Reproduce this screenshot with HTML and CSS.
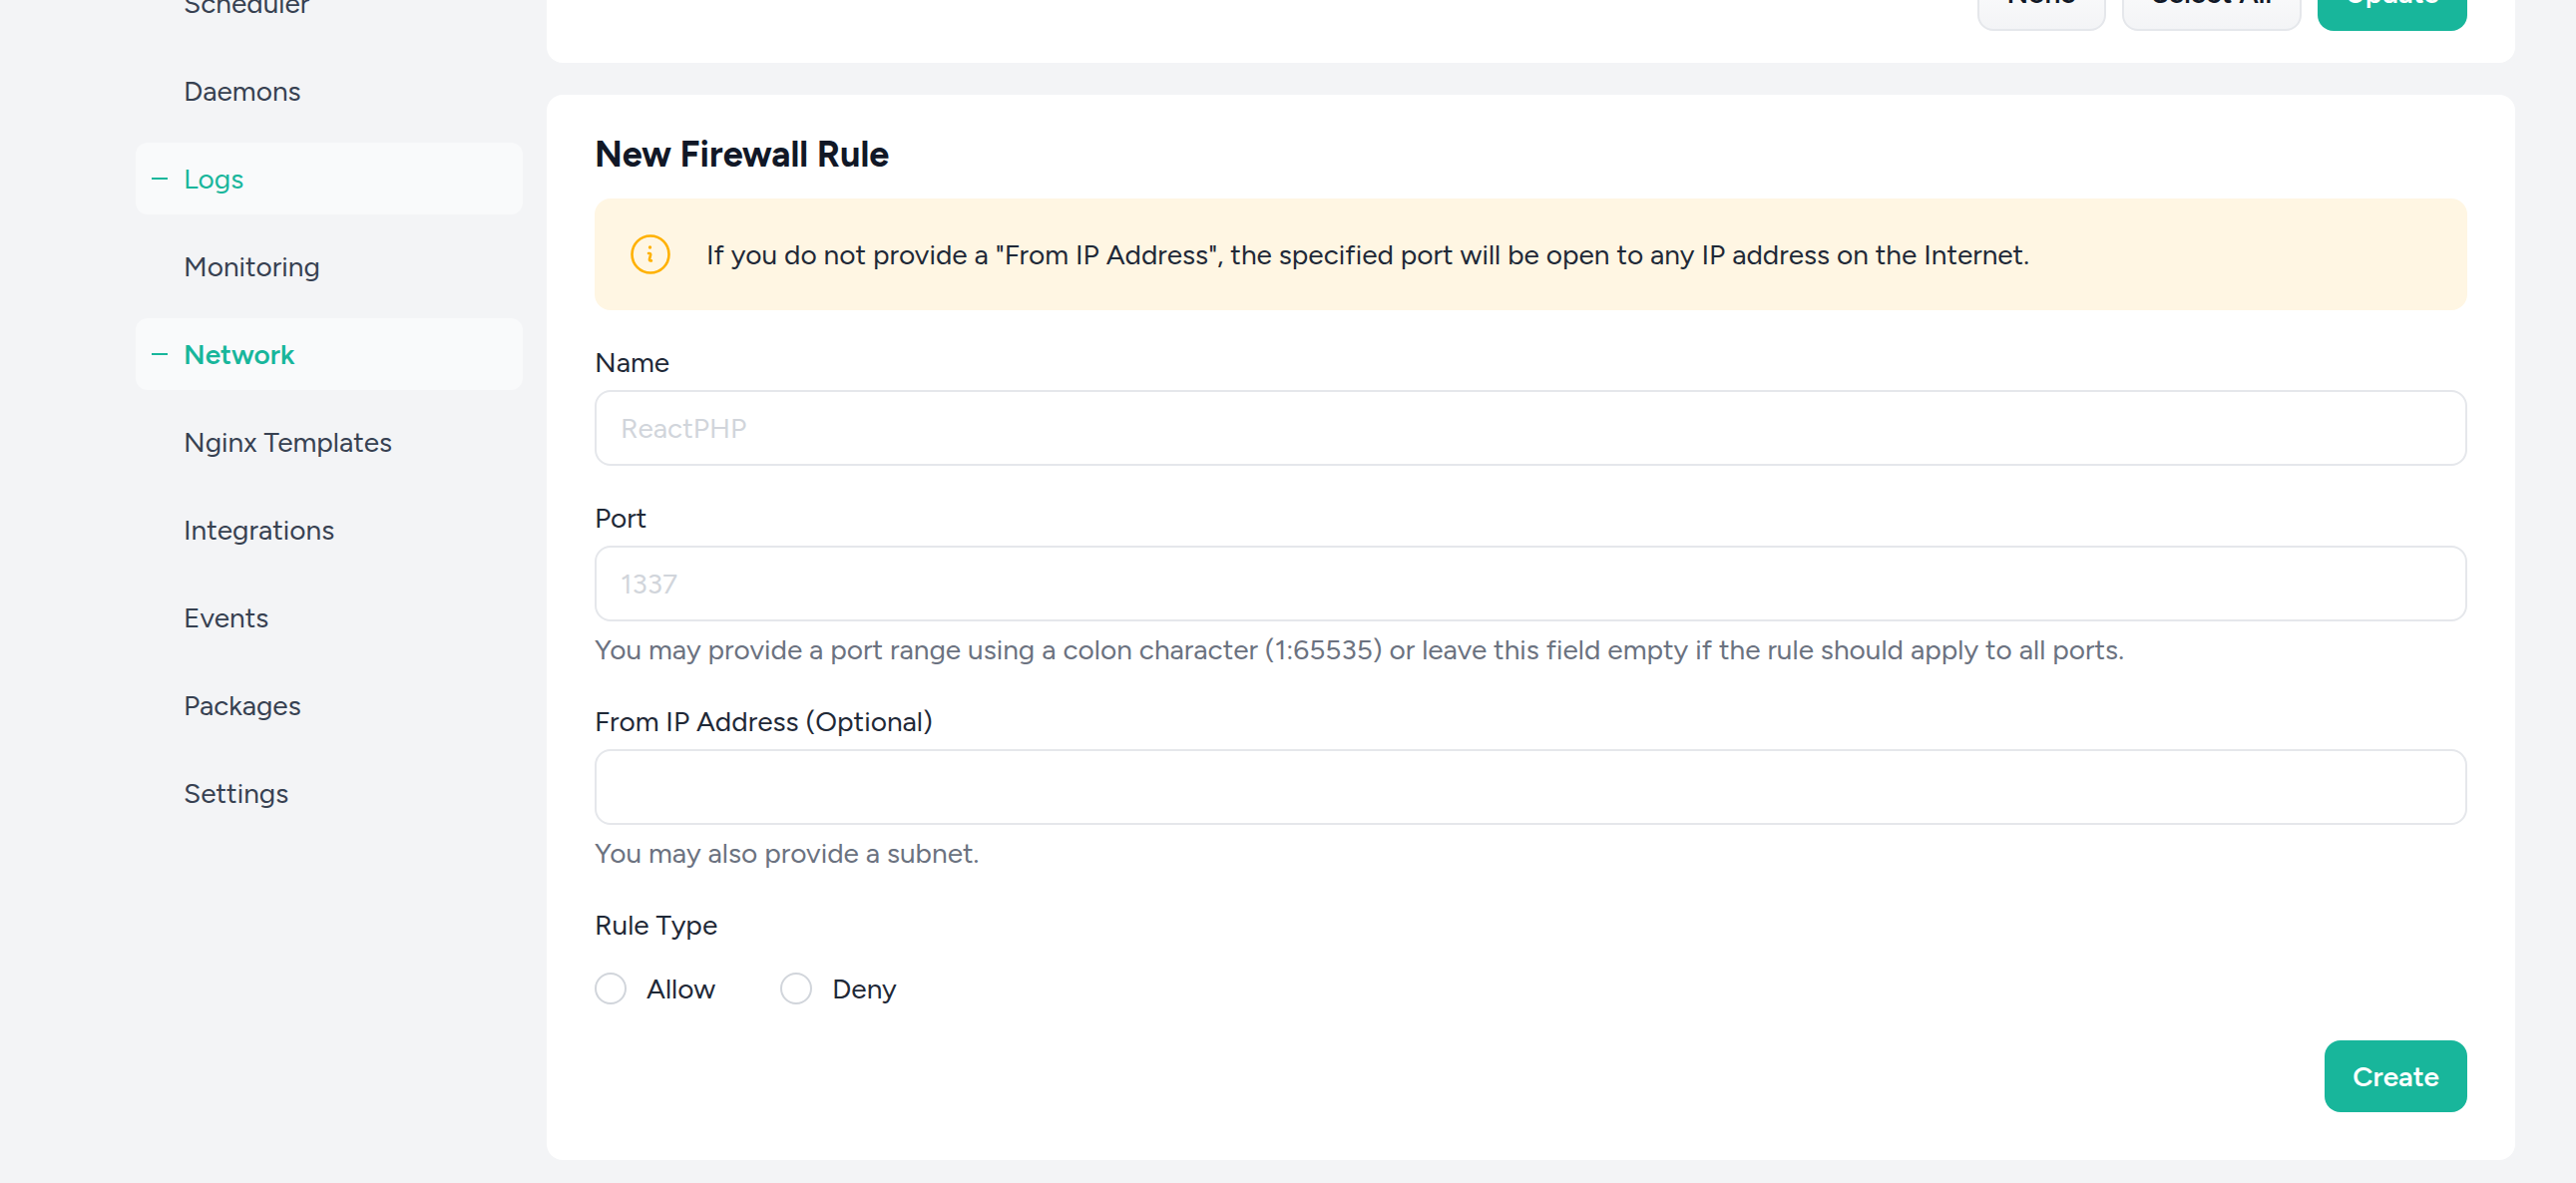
FILE: index.html
```html
<!DOCTYPE html>
<html lang="en">
<head>
<meta charset="utf-8">
<meta name="viewport" content="width=device-width, initial-scale=1">
<title>Network</title>
<link rel="stylesheet" href="styles.css">
</head>
<body>
<div class="page">
  <nav class="sidebar" aria-label="Server">
    <a class="nav-link" href="#">Scheduler</a>
    <a class="nav-link" href="#">Daemons</a>
    <a class="nav-link is-highlighted" href="#">Logs</a>
    <a class="nav-link" href="#">Monitoring</a>
    <a class="nav-link is-highlighted is-current" href="#" aria-current="page">Network</a>
    <a class="nav-link" href="#">Nginx Templates</a>
    <a class="nav-link" href="#">Integrations</a>
    <a class="nav-link" href="#">Events</a>
    <a class="nav-link" href="#">Packages</a>
    <a class="nav-link" href="#">Settings</a>
  </nav>

  <main class="content">
    <section class="card card-footer">
      <button class="button button-secondary" type="button">None</button>
      <button class="button button-secondary" type="button">Select All</button>
      <button class="button button-primary" type="button">Update</button>
    </section>

    <form class="card card-form">
      <h2 class="card-title">New Firewall Rule</h2>

      <div class="alert">
        <svg class="alert-icon" viewBox="0 0 40 40" fill="none" stroke="currentColor" stroke-linecap="round" stroke-linejoin="round" aria-hidden="true">
          <circle cx="20" cy="20" r="18.500" stroke-width="2.600"/>
          <circle cx="19.500" cy="13" r="1.700" fill="currentColor" stroke="none"/>
          <path d="M18 19h.9c1 0 1.400.7 1.200 1.600l-1.100 4.200c-.2.900.2 1.600 1.100 1.600h.8" stroke-width="2.600"/>
        </svg>
        <p class="alert-text">If you do not provide a "From IP Address", the specified port will be open to any IP address on the Internet.</p>
      </div>

      <div class="field">
        <label for="name">Name</label>
        <input class="text-input" id="name" type="text" placeholder="ReactPHP">
      </div>

      <div class="field">
        <label for="port">Port</label>
        <input class="text-input" id="port" type="text" placeholder="1337">
        <p class="help">You may provide a port range using a colon character (1:65535) or leave this field empty if the rule should apply to all ports.</p>
      </div>

      <div class="field">
        <label for="from-ip">From IP Address (Optional)</label>
        <input class="text-input" id="from-ip" type="text">
        <p class="help">You may also provide a subnet.</p>
      </div>

      <fieldset class="rule-type">
        <legend>Rule Type</legend>
        <div class="choices">
          <label class="choice"><input class="radio" type="radio" name="rule-type" value="allow">Allow</label>
          <label class="choice"><input class="radio" type="radio" name="rule-type" value="deny">Deny</label>
        </div>
      </fieldset>

      <div class="actions">
        <button class="button button-primary" type="submit">Create</button>
      </div>
    </form>
  </main>
</div>
</body>
</html>
```
FILE: styles.css
```css
*,
*::before {
  box-sizing: border-box;
}

body {
  margin: 0;
  background: #f3f4f6;
  color: #1f2937;
  font-family: Figtree, Lato, "Liberation Sans", sans-serif;
  font-size: 28px;
  line-height: 40px;
}

h2,
p {
  margin: 0;
}

/* The page is shown scrolled past the top of the first card. */
.page {
  display: grid;
  grid-template-columns: 388px minmax(0, 1fr);
  gap: 24px;
  margin-top: -77px;
  padding: 0 61px 23px 136px;
}

.sidebar {
  display: flex;
  flex-direction: column;
  gap: 16px;
  padding-top: 44px;
}

.nav-link {
  display: flex;
  align-items: center;
  padding: 16px 16px 16px 48px;
  border-radius: 12px;
  color: #374151;
  text-decoration: none;
}

.is-highlighted {
  padding-left: 16px;
  gap: 16px;
  background: #f9fafb;
  color: #18b69b;
}

.is-highlighted::before {
  content: "";
  width: 16px;
  height: 2px;
  background: currentColor;
}

.is-current {
  font-weight: 600;
}

.content {
  display: flex;
  flex-direction: column;
  gap: 32px;
}

.card {
  border-radius: 16px;
  background: #fff;
}

.card-footer {
  display: flex;
  justify-content: flex-end;
  gap: 16px;
  padding: 32px 48px;
}

.card-form {
  display: flex;
  flex-direction: column;
  gap: 32px;
  padding: 40px 48px 48px;
}

.card-title {
  margin-bottom: -8px;
  color: #111827;
  font-size: 36px;
  font-weight: 700;
  line-height: 40px;
}

.alert {
  display: flex;
  align-items: center;
  gap: 36px;
  padding: 36px;
  border-radius: 16px;
  background: #fff6e3;
}

.alert-icon {
  flex: none;
  width: 40px;
  height: 40px;
  color: #ffb100;
}

.field {
  display: flex;
  flex-direction: column;
  gap: 8px;
}

.text-input {
  width: 100%;
  padding: 16px 24px;
  border: 2px solid #e5e7eb;
  border-radius: 16px;
  background: #fff;
  color: inherit;
  font: inherit;
}

.text-input::placeholder {
  color: #d1d5db;
  opacity: 1;
}

.help {
  color: #6b7280;
}

.rule-type {
  margin: 0;
  padding: 0;
  border: 0;
}

.rule-type legend {
  padding: 0;
}

.choices {
  display: flex;
  gap: 65px;
  padding-top: 24px;
}

.choice {
  display: flex;
  align-items: center;
  gap: 20px;
}

.radio {
  appearance: none;
  flex: none;
  width: 32px;
  height: 32px;
  margin: 0;
  border: 2px solid #d1d5db;
  border-radius: 50%;
  background: #fff;
}

.radio:checked {
  border: 10px solid #18b69b;
}

.actions {
  display: flex;
  justify-content: flex-end;
}

.button {
  padding: 16px 28px;
  border: 0;
  border-radius: 16px;
  font: inherit;
  font-weight: 600;
}

.button-primary {
  background: #18b69b;
  color: #fff;
}

.button-secondary {
  border: 2px solid #e5e7eb;
  background: linear-gradient(#fff, #f3f4f6);
  color: #111827;
}
```
